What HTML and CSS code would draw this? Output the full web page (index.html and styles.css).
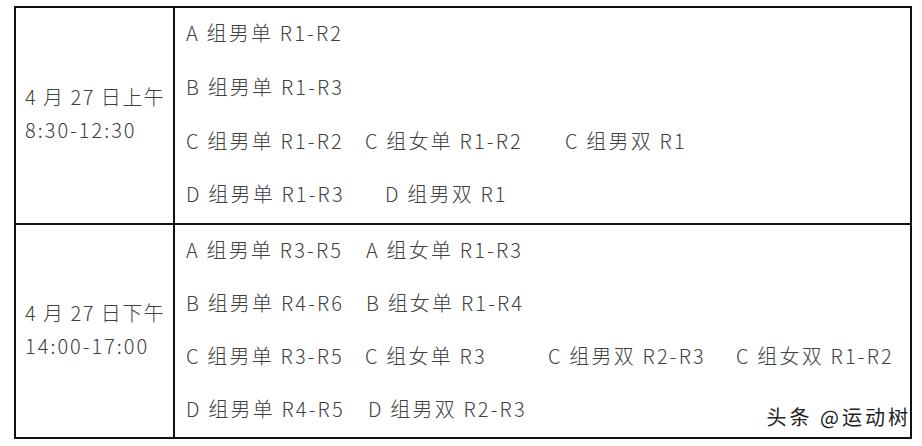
FILE: index.html
```html
<!DOCTYPE html>
<html lang="zh-CN">
<head>
<meta charset="utf-8">
<title>赛程</title>
<link rel="stylesheet" href="styles.css">
</head>
<body>
<div class="page">
  <div class="table">
    <div class="time">
      <div>4 月 27 日上午</div>
      <div class="hour">8:30-12:30</div>
    </div>
    <div class="events">
      <div class="row"><span class="it">A 组男单 R1-R2</span></div>
      <div class="row"><span class="it">B 组男单 R1-R3</span></div>
      <div class="row"><span class="it w179">C 组男单 R1-R2</span><span class="it w200">C 组女单 R1-R2</span><span class="it">C 组男双 R1</span></div>
      <div class="row"><span class="it w199">D 组男单 R1-R3</span><span class="it">D 组男双 R1</span></div>
    </div>
    <div class="time bt">
      <div>4 月 27 日下午</div>
      <div class="hour">14:00-17:00</div>
    </div>
    <div class="events bt">
      <div class="row"><span class="it w180">A 组男单 R3-R5</span><span class="it">A 组女单 R1-R3</span></div>
      <div class="row"><span class="it w180">B 组男单 R4-R6</span><span class="it">B 组女单 R1-R4</span></div>
      <div class="row"><span class="it w179">C 组男单 R3-R5</span><span class="it w183">C 组女单 R3</span><span class="it w188">C 组男双 R2-R3</span><span class="it">C 组女双 R1-R2</span></div>
      <div class="row"><span class="it w182">D 组男单 R4-R5</span><span class="it">D 组男双 R2-R3</span></div>
    </div>
  </div>
  <div class="mark">头条 @运动树</div>
</div>
</body>
</html>
```
FILE: styles.css
```css
html, body {
  margin: 0;
  padding: 0;
  background: #fff;
}
.page {
  position: relative;
  width: 922px;
  height: 446px;
  overflow: hidden;
  font-family: "Noto Sans CJK SC", "Noto Sans", sans-serif;
  color: #404040;
}
.table {
  margin: 6px 0 0 14px;
  width: 894px;
  height: 429px;
  border: 2px solid #111;
  display: grid;
  grid-template-columns: 159px 1fr;
  grid-template-rows: 1fr 1fr;
}
.bt {
  border-top: 2px solid #111;
}
.time {
  border-right: 2px solid #111;
  padding-left: 9px;
  padding-bottom: 4px;
  display: flex;
  flex-direction: column;
  justify-content: center;
  font-size: 20px;
  font-weight: 300;
  line-height: 33px;
  letter-spacing: 1.5px;
  white-space: nowrap;
}
.hour {
  letter-spacing: 2px;
}
.events {
  padding-left: 11px;
  display: grid;
  grid-template-rows: repeat(4, 1fr);
  font-size: 20px;
  font-weight: 300;
  letter-spacing: 2.2px;
  white-space: nowrap;
}
.row {
  display: flex;
  align-items: center;
  padding-bottom: 4px;
}
.it {
  display: inline-block;
}
.w179 { width: 179px; }
.w180 { width: 180px; }
.w182 { width: 182px; }
.w183 { width: 183px; }
.w188 { width: 188px; }
.w199 { width: 199px; }
.w200 { width: 200px; }
.mark {
  position: absolute;
  right: 11px;
  bottom: 15px;
  font-size: 20px;
  color: #222;
  letter-spacing: 3px;
  text-shadow: 0 0 2px #fff, 0 0 2px #fff;
}
```
